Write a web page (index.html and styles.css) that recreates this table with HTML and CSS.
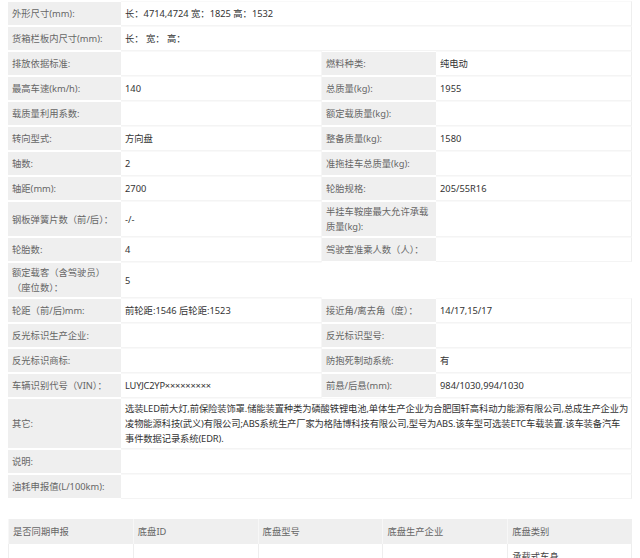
FILE: index.html
```html
<!DOCTYPE html>
<html lang="zh-CN">
<head>
<meta charset="utf-8">
<title>车辆参数</title>
<link rel="stylesheet" href="styles.css">
</head>
<body>
<table class="spec">
  <colgroup>
    <col class="c-label"><col class="c-val"><col class="c-label2"><col class="c-val2">
  </colgroup>
  <tr><th>外形尺寸(mm):</th><td colspan="3">长：4714,4724 宽：1825 高：1532</td></tr>
  <tr><th>货箱栏板内尺寸(mm):</th><td colspan="3">长： 宽： 高：</td></tr>
  <tr><th>排放依据标准:</th><td></td><th>燃料种类:</th><td>纯电动</td></tr>
  <tr><th>最高车速(km/h):</th><td>140</td><th>总质量(kg):</th><td>1955</td></tr>
  <tr><th>载质量利用系数:</th><td></td><th>额定载质量(kg):</th><td></td></tr>
  <tr><th>转向型式:</th><td>方向盘</td><th>整备质量(kg):</th><td>1580</td></tr>
  <tr><th>轴数:</th><td>2</td><th>准拖挂车总质量(kg):</th><td></td></tr>
  <tr><th>轴距(mm):</th><td>2700</td><th>轮胎规格:</th><td>205/55R16</td></tr>
  <tr><th>钢板弹簧片数（前/后）：</th><td>-/-</td><th>半挂车鞍座最大允许承载质量(kg):</th><td></td></tr>
  <tr><th>轮胎数:</th><td>4</td><th>驾驶室准乘人数（人）：</th><td></td></tr>
  <tr><th>额定载客（含驾驶员）<br>（座位数）：</th><td class="open">5</td></tr>
  <tr><th>轮距（前/后)mm:</th><td>前轮距:1546 后轮距:1523</td><th>接近角/离去角（度）：</th><td>14/17,15/17</td></tr>
  <tr><th>反光标识生产企业:</th><td></td><th>反光标识型号:</th><td></td></tr>
  <tr><th>反光标识商标:</th><td></td><th>防抱死制动系统:</th><td>有</td></tr>
  <tr><th>车辆识别代号（VIN）：</th><td class="vin">LUYJC2YP×××××××××</td><th>前悬/后悬(mm):</th><td>984/1030,994/1030</td></tr>
  <tr><th>其它:</th><td colspan="3" class="note">选装LED前大灯,前保险装饰罩.储能装置种类为磷酸铁锂电池,单体生产企业为合肥国轩高科动力能源有限公司,总成生产企业为凌物能源科技(武义)有限公司;ABS系统生产厂家为格陆博科技有限公司,型号为ABS.该车型可选装ETC车载装置.该车装备汽车事件数据记录系统(EDR).</td></tr>
  <tr><th>说明:</th><td colspan="3"></td></tr>
  <tr><th>油耗申报值(L/100km):</th><td colspan="3"></td></tr>
</table>

<table class="chassis">
  <tr><th>是否同期申报</th><th>底盘ID</th><th>底盘型号</th><th>底盘生产企业</th><th>底盘类别</th></tr>
  <tr><td></td><td></td><td></td><td></td><td class="kind">承载式车身</td></tr>
</table>
</body>
</html>
```

FILE: styles.css
```css
html, body {
  background: #fff;
}
body {
  margin: 0 8px;
  font-family: "Noto Sans", "Noto Sans CJK SC", sans-serif;
  font-size: 9.3px;
  line-height: 15px;
  color: #333;
}

table {
  width: 624px;
  table-layout: fixed;
  border-collapse: separate;
  border-spacing: 0;
}

.spec {
  margin-top: 1px;
}
.c-label { width: 113px; }
.c-val { width: 201px; }
.c-label2 { width: 114px; }
.c-val2 { width: 196px; }

.spec tr {
  height: 25px;
}
.spec th,
.spec td {
  padding: 2px 2px 2px 4px;
  border-top: 1px solid #f9f9f9;
  border-bottom: 1px solid #f4f4f4;
  vertical-align: middle;
  text-align: left;
}
.spec th {
  font-weight: normal;
  color: #666;
  background: #efefef;
  border-top-color: #fff;
  border-bottom-color: #fff;
}
.spec td {
  color: #333;
  border-right: 1px solid #f6f6f6;
}
.spec td:last-child {
  border-right-color: #eee;
}
.spec td.open {
  border-right-color: transparent;
}
.spec td.vin {
  letter-spacing: -0.2px;
}
.spec td.note {
  letter-spacing: -0.12px;
}

.chassis {
  margin-top: 20px;
}
.chassis th {
  height: 25px;
  padding: 0 4px;
  font-weight: normal;
  text-align: left;
  color: #666;
  background: #efefef;
  border-left: 1px solid #f7f7f7;
}
.chassis td {
  height: 30px;
  padding: 5px 4px 0;
  vertical-align: top;
  color: #444;
  border-left: 1px solid #eee;
  border-bottom: 1px solid #eee;
}
.chassis td:last-child {
  border-right: 1px solid #eee;
}
```
